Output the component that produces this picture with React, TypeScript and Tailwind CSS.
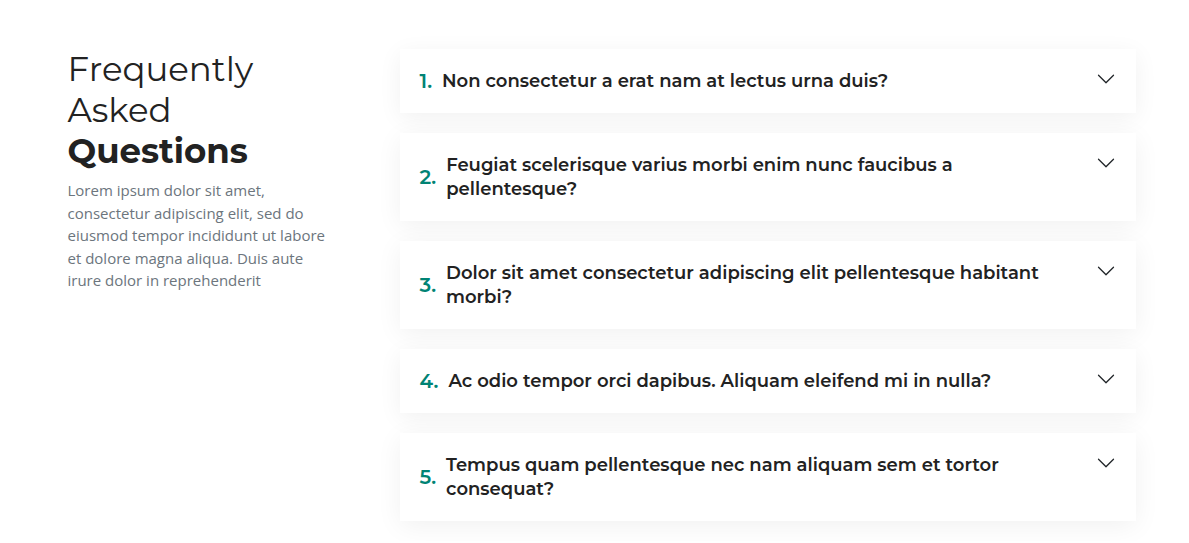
import { useState } from "react";

const questions = [
  "Non consectetur a erat nam at lectus urna duis?",
  "Feugiat scelerisque varius morbi enim nunc faucibus a pellentesque?",
  "Dolor sit amet consectetur adipiscing elit pellentesque habitant morbi?",
  "Ac odio tempor orci dapibus. Aliquam eleifend mi in nulla?",
  "Tempus quam pellentesque nec nam aliquam sem et tortor consequat?",
];

function Chevron({ open }: { open: boolean }) {
  return (
    <svg
      viewBox="0 0 16 16"
      fill="currentColor"
      aria-hidden="true"
      className={open ? "size-5 shrink-0 rotate-180" : "size-5 shrink-0"}
    >
      <path
        fillRule="evenodd"
        d="M1.646 4.646a.5.5 0 0 1 .708 0L8 10.293l5.646-5.647a.5.5 0 0 1 .708.708l-6 6a.5.5 0 0 1-.708 0l-6-6a.5.5 0 0 1 0-.708z"
      />
    </svg>
  );
}

export default function App() {
  const [openIndex, setOpenIndex] = useState<number | null>(null);

  return (
    <section className="bg-white pt-[49px] pb-5">
      <div className="mx-auto grid max-w-[1140px] grid-cols-1 gap-10 px-6 text-[#212529] md:grid-cols-[264px_1fr] md:gap-[68px] md:pr-[29px] md:pl-[43px]">
        <div>
          <h2 className="font-['Montserrat','Inter',sans-serif] text-[34px] leading-[1.2] font-normal text-[#222222]">
            Frequently Asked <strong className="font-bold">Questions</strong>
          </h2>
          <p className="mt-2 font-['Open_Sans',sans-serif] text-[15px] leading-normal text-[#6c757d]">
            Lorem ipsum dolor sit amet, consectetur adipiscing elit, sed do eiusmod tempor
            incididunt ut labore et dolore magna aliqua. Duis aute irure dolor in reprehenderit
          </p>
        </div>

        <ol className="flex flex-col gap-5 font-['Montserrat','Inter',sans-serif]">
          {questions.map((question, index) => (
            <li key={question} className="bg-white shadow-[0_5px_25px_rgba(0,0,0,0.06)]">
              <h3>
                <button
                  type="button"
                  aria-expanded={openIndex === index}
                  onClick={() => setOpenIndex(openIndex === index ? null : index)}
                  className="flex w-full cursor-pointer items-start justify-between gap-2 p-5 text-left text-[18px] leading-6 font-semibold"
                >
                  <span className="flex items-center gap-2.5 text-[#222222]">
                    <span className="text-[20px] text-[#008374]">{index + 1}.</span>
                    <span>{question}</span>
                  </span>
                  <Chevron open={openIndex === index} />
                </button>
              </h3>
            </li>
          ))}
        </ol>
      </div>
    </section>
  );
}
